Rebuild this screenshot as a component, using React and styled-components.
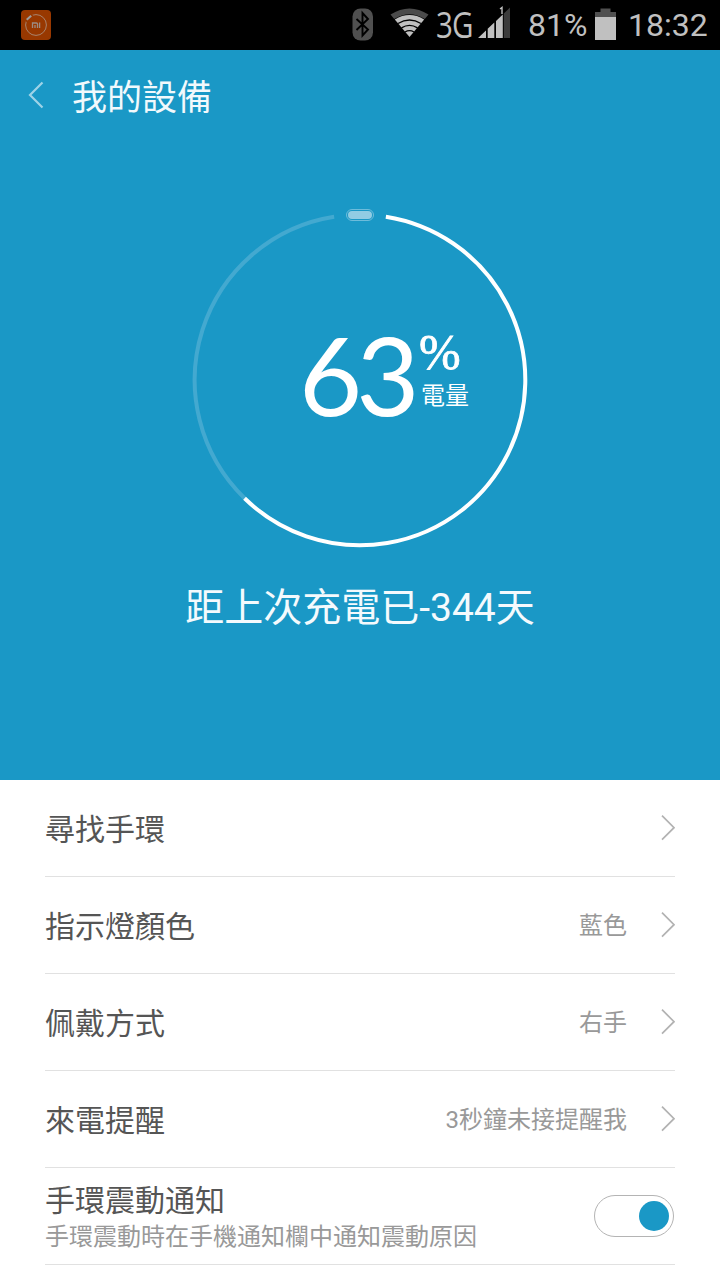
import React, { useState } from 'react';

import styled, { createGlobalStyle } from 'styled-components';

const GlobalStyle = createGlobalStyle`
  body {
    margin: 0;
    background: #fff;
    font-family: Roboto, "Noto Sans CJK SC", sans-serif;
  }
  * {
    box-sizing: border-box;
  }
`;

const Screen = styled.div`
  width: 720px;
  height: 1280px;
  overflow: hidden;
  background: #fff;
`;

const StatusBar = styled.div`
  display: flex;
  align-items: center;
  height: 50px;
  padding: 0 12px 0 21px;
  background: #000;
  color: #c0c0c0;
  font-size: 32px;
  line-height: 48px;

  svg {
    display: block;
    flex: none;
  }
`;

const StatusText = styled.span`
  width: ${({ $width }) => $width}px;
  white-space: nowrap;
`;

const Network = styled.span`
  flex: none;
  width: 50px;
  margin-right: -8px;
  padding-bottom: 1px;
  font-family: "Open Sans", sans-serif;
  font-size: 36px;
  line-height: 49px;
  letter-spacing: -1px;
  transform: scaleX(0.82);
  transform-origin: left;
`;

const Spacer = styled.div`
  flex: 1;
`;

const Hero = styled.div`
  display: flex;
  flex-direction: column;
  align-items: center;
  height: 730px;
  background: #1a98c6;
  color: #fff;
`;

const TitleBar = styled.div`
  display: flex;
  align-items: center;
  gap: 27px;
  width: 100%;
  height: 90px;
  padding-left: 27px;
  font-size: 35px;
  color: #f2f9fc;

  div {
    padding-bottom: 2px;
  }
`;

const RingBlock = styled.div`
  display: grid;
  width: 360px;
  height: 360px;
  margin-top: 60px;

  > * {
    grid-area: 1 / 1;
  }
`;

const Charge = styled.div`
  display: flex;
  align-self: start;
  padding: 110px 0 0 119px;
`;

const Digits = styled.div`
  width: 122px;
  font-family: Lato, sans-serif;
  font-size: 109px;
  line-height: 128px;
  letter-spacing: -6px;
`;

const Unit = styled.div`
  font-size: 24px;
  line-height: 30px;

  .percent {
    height: 71px;
    margin-left: -2px;
    padding-top: 12px;
    font-family: "Liberation Serif", serif;
    font-size: 50px;
    line-height: 60px;
    -webkit-text-stroke: 0.8px #fff;
  }
`;

const LastCharge = styled.div`
  margin-top: 19px;
  font-size: 39px;
  line-height: 58px;
  color: #f4fafd;
`;

const List = styled.div`
  padding: 0 45px;
`;

const Row = styled.div`
  display: flex;
  align-items: center;
  height: 97px;
  border-bottom: 1px solid #e1e1e1;
`;

const Label = styled.div`
  flex: 1;
  padding-top: ${({ $double }) => ($double ? 6 : 3)}px;
  font-size: 30px;
  line-height: 36px;
  color: #555;
`;

const Hint = styled.div`
  font-size: 24px;
  line-height: 36px;
  color: #999;
`;

const Value = styled.div`
  margin-right: 33px;
  padding-bottom: 4px;
  font-size: 24px;
  color: #999;
`;

const Toggle = styled.button`
  display: flex;
  align-items: center;
  justify-content: ${({ $on }) => ($on ? 'flex-end' : 'flex-start')};
  width: 80px;
  height: 42px;
  margin-right: 1px;
  padding: 0 4px;
  border: 1px solid #b4b4b4;
  border-radius: 21px;
  background: #fff;
`;

const Knob = styled.span`
  width: 30px;
  height: 30px;
  border-radius: 50%;
  background: ${({ $on }) => ($on ? '#1a98c6' : '#b4b4b4')};
`;

const settings = [
  { label: '尋找手環' },
  { label: '指示燈顏色', value: '藍色' },
  { label: '佩戴方式', value: '右手' },
  { label: '來電提醒', value: '3秒鐘未接提醒我' },
];

const MiIcon = () => (
  <svg width="30" height="30" viewBox="0 0 30 30">
    <rect width="30" height="30" rx="4" fill="#983800" />
    <circle cx="15" cy="15" r="10.4" fill="none" stroke="#a8846e" strokeWidth="1" />
    <path d="M4.5 11L11 4.5" stroke="#983800" strokeWidth="5" />
    <path d="M5.7 9.8L10.2 5.7" stroke="#9c9c9c" strokeWidth="2" />
    <path d="M11.5 18v-5h4q1 0 1 1v4M14 15v3M18.6 12.5V18" fill="none" stroke="#9c8c82" strokeWidth="1.3" />
  </svg>
);

const BluetoothIcon = () => (
  <svg width="22" height="34" viewBox="0 0 22 34">
    <rect x="0.5" y="0.5" width="20.5" height="32" rx="8" fill="#505050" />
    <path d="M4.5 11L16 21.5L10.5 27.5V5L16 11L4.5 22" fill="none" stroke="#000" strokeWidth="1.9" />
  </svg>
);

const WifiIcon = () => (
  <svg width="40" height="34" viewBox="0 0 40 34">
    <path d="M0.5 6.5Q19.5 -5.5 38.5 6.5L34.8 11Q19.5 1.5 4.2 11Z" fill="#4b4b4b" />
    <path d="M4.8 11.4Q19.5 2.8 34.2 11.4L19.5 29Z" fill="#c0c0c0" />
    <path d="M8 15.5Q19.5 8.6 31 15.5M11.5 19.8Q19.5 15 27.5 19.8M15 24Q19.5 21.3 24 24" fill="none" stroke="#000" strokeWidth="1.4" />
  </svg>
);

const SignalIcon = () => (
  <svg width="34" height="38" viewBox="0 0 34 38">
    <path d="M0 32L8 24.5V32ZM9.7 22.8L16.3 16.6V32H9.7ZM18 15L24.8 8.5V32H18Z" fill="#c0c0c0" />
    <path d="M25.8 7.5L32 1.5V32H25.8Z" fill="#3c3c3c" />
    <path d="M22 3L24 1.5V8" fill="none" stroke="#c0c0c0" strokeWidth="1.4" />
  </svg>
);

const BatteryIcon = () => (
  <svg width="21" height="34" viewBox="0 0 21 34">
    <path d="M0 4H5.5V0.5H15.5V4H21V9H0Z" fill="#505050" />
    <rect y="9" width="21" height="23" fill="#c0c0c0" />
  </svg>
);

const BackIcon = () => (
  <svg width="18" height="28" viewBox="0 0 18 28">
    <path d="M15.5 1.5L3 14L15.5 26.5" fill="none" stroke="#9ed3e7" strokeWidth="2.2" />
  </svg>
);

const ArrowIcon = () => (
  <svg width="15" height="26" viewBox="0 0 15 26">
    <path d="M2 0.7L14 12.7L2 24.7" fill="none" stroke="#b2b2b2" strokeWidth="1.7" />
  </svg>
);

// angles are clockwise from 12 o'clock
const point = (deg) => {
  const rad = (deg * Math.PI) / 180;
  return `${180 + 165.3 * Math.sin(rad)} ${180 - 165.3 * Math.cos(rad)}`;
};

const Ring = () => (
  <svg width="360" height="360" viewBox="0 0 360 360">
    <path d={`M${point(224.3)}A165.3 165.3 0 0 1 ${point(351)}`} fill="none" stroke="#43a9d0" strokeWidth="4" />
    <path d={`M${point(9)}A165.3 165.3 0 1 1 ${point(224.3)}`} fill="none" stroke="#fff" strokeWidth="4" />
    <rect x="166.5" y="9.5" width="27" height="11" rx="5.5" fill="none" stroke="#6dbcdb" />
    <rect x="168" y="11" width="24" height="8" rx="4" fill="#91cce3" />
  </svg>
);

const App = () => {
  const [notify, setNotify] = useState(true);

  return (
    <Screen>
      <GlobalStyle />
      <StatusBar>
        <MiIcon />
        <Spacer />
        <BluetoothIcon />
        <StatusText $width={16} />
        <WifiIcon />
        <StatusText $width={6} />
        <Network>3G</Network>
        <SignalIcon />
        <StatusText $width={16} />
        <StatusText $width={67}>81%</StatusText>
        <BatteryIcon />
        <StatusText $width={12} />
        <StatusText $width={80}>18:32</StatusText>
      </StatusBar>
      <Hero>
        <TitleBar>
          <BackIcon />
          <div>我的設備</div>
        </TitleBar>
        <RingBlock>
          <Ring />
          <Charge>
            <Digits>63</Digits>
            <Unit>
              <div className='percent'>%</div>
              <div>電量</div>
            </Unit>
          </Charge>
        </RingBlock>
        <LastCharge>距上次充電已-344天</LastCharge>
      </Hero>
      <List>
        {settings.map(({ label, value }) => (
          <Row key={label}>
            <Label>{label}</Label>
            {value && <Value>{value}</Value>}
            <ArrowIcon />
          </Row>
        ))}
        <Row>
          <Label $double>
            手環震動通知
            <Hint>手環震動時在手機通知欄中通知震動原因</Hint>
          </Label>
          <Toggle $on={notify} onClick={() => setNotify(!notify)}>
            <Knob $on={notify} />
          </Toggle>
        </Row>
      </List>
    </Screen>
  );
};

export default App;
